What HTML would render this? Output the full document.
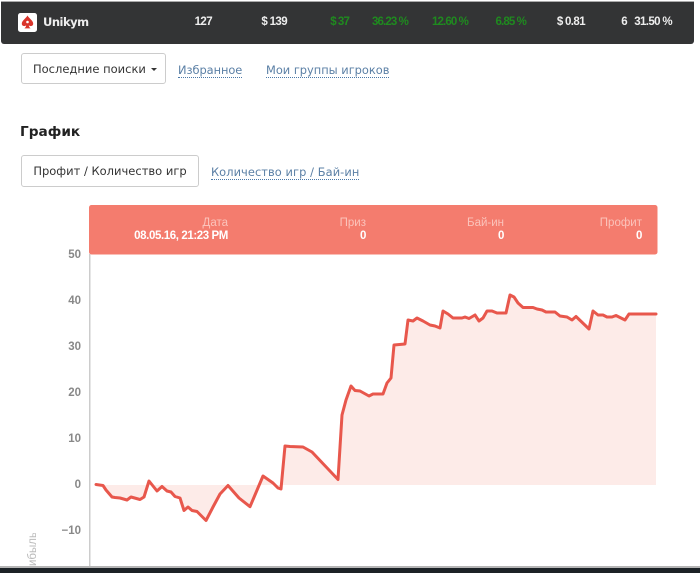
<!DOCTYPE html>
<html><head><meta charset="utf-8"><style>
html,body{margin:0;padding:0;background:#fff}
body{width:700px;height:573px;overflow:hidden;position:relative;font-family:"DejaVu Sans","Liberation Sans",sans-serif;filter:blur(.25px)}
.a{position:absolute;white-space:nowrap}
.bar{left:1px;top:1px;width:693px;height:43px;background:#333435;border-radius:0 0 3px 3px;border-top:1px solid #aaa;box-sizing:border-box}
.s{top:16px;font:bold 11.5px "Liberation Sans",sans-serif;color:#eee;transform:translateX(-100%);letter-spacing:-.6px;word-spacing:-.2px}
.g{color:#1f8a1f;letter-spacing:-.85px}
.btn{border:1px solid #ccc;border-radius:3px;box-sizing:border-box;background:#fff;color:#333;font-size:11.5px;line-height:31px;text-align:center}
.l{font-size:11.4px;color:#5a7fa5;border-bottom:1px dotted #4a78a8;line-height:14px}
.h{color:#fbc3bb;font:11.5px "Liberation Sans",sans-serif;top:217px;transform:translateX(-100%)}
.v{color:#fff;font:bold 11.5px "Liberation Sans",sans-serif;top:230px;transform:translateX(-100%);letter-spacing:-.4px}
.y{font:bold 11.5px "Liberation Sans",sans-serif;color:#888;transform:translateX(-100%)}
</style></head><body>
<div class="a bar"></div>
<svg class="a" style="left:18px;top:13px" width="20" height="19" viewBox="0 0 20 19"><rect width="19" height="19" rx="2.5" fill="#fff"/><path d="M9.5 2.5C7.5 6 3.8 7.5 3.8 10.8c0 2.2 2.6 3 4.4 1.6-.2 1.3-.8 2.2-1.8 3h6.2c-1-.8-1.6-1.7-1.8-3 1.8 1.4 4.4.6 4.4-1.6C15.2 7.5 11.5 6 9.5 2.5z" fill="#d9342b"/><circle cx="9.5" cy="9" r="1.3" fill="#fff"/></svg>
<div class="a" style="left:43px;top:15px;font:bold 11.5px 'DejaVu Sans',sans-serif;color:#eee;letter-spacing:-.5px">Unikym</div>
<div class="a s" style="left:212px">127</div>
<div class="a s" style="left:287px">$ 139</div>
<div class="a s g" style="left:349px">$ 37</div>
<div class="a s g" style="left:408px">36.23 %</div>
<div class="a s g" style="left:468px">12.60 %</div>
<div class="a s g" style="left:526px">6.85 %</div>
<div class="a s" style="left:585px">$ 0.81</div>
<div class="a s" style="left:627px">6</div>
<div class="a s" style="left:672px">31.50 %</div>

<div class="a btn" style="left:21px;top:53px;width:145px;height:31px;text-align:left;padding-left:11px">Последние поиски</div>
<div class="a" style="left:151px;top:68px;width:0;height:0;border:3px solid transparent;border-top-color:#333;border-bottom:0"></div>
<div class="a l" style="left:178px;top:63px;letter-spacing:-.05px">Избранное</div>
<div class="a l" style="left:266px;top:63px">Мои группы игроков</div>

<div class="a" style="left:20px;top:124px;font:bold 13.7px 'DejaVu Sans',sans-serif;color:#222">График</div>
<div class="a btn" style="left:21px;top:155px;width:178px;height:32px">Профит / Количество игр</div>
<div class="a l" style="left:211px;top:165px;letter-spacing:.08px">Количество игр / Бай-ин</div>

<svg class="a" style="left:0;top:0" width="700" height="573" viewBox="0 0 700 573">
<rect x="89" y="205" width="568.5" height="49.5" rx="2.5" fill="#f47c6e"/>
<rect x="89" y="254" width="1.5" height="312" fill="#ccc"/>
<path fill="#fdebe8" d="M96 485L103 485.5 106 490 112 497 115 497.5 120 498 127 500 131 497 140 499.5 144 497 149 481 157 491 162 486.5 167 491 171 492 175 496.5 180 498 184 510.5 188 507 192 510.5 197 511.5 206 520.5 213 507 220 494 228 485.5 239 498 250 506.7 263 476 273 483 278 488 281 489 285 446 290 446.5 303 447 312 452 338 479.5 342 415 346 400 351 386 355 390.5 360 391 369 396 373 394 383 394 387 383 391 378 394 345 405 344 408 320 413 321 417 318 423 321 430 325 435 326 440 328 443 311 448 314 453 318 462 318 465 317 469 318.5 475 315 479 321 483 318 487 311 492 311 497 313 506 313 510 295 514 297 518 303 523 307.5 533 307.5 537 309 542 310 546 312 555 312 560 316 567 317 572 320 576 316.5 589 329 593 311 598 315 603 315 607 317 612 317 616 315.5 625 320 629 314 656 314 656 485Z"/>
<path fill="none" stroke="#e8574c" stroke-width="3" stroke-linejoin="round" stroke-linecap="round" d="M96 484.5L103 485.5 106 490 112 497 115 497.5 120 498 127 500 131 497 140 499.5 144 497 149 481 157 491 162 486.5 167 491 171 492 175 496.5 180 498 184 510.5 188 507 192 510.5 197 511.5 206 520.5 213 507 220 494 228 485.5 239 498 250 506.7 263 476 273 483 278 488 281 489 285 446 290 446.5 303 447 312 452 338 479.5 342 415 346 400 351 386 355 390.5 360 391 369 396 373 394 383 394 387 383 391 378 394 345 405 344 408 320 413 321 417 318 423 321 430 325 435 326 440 328 443 311 448 314 453 318 462 318 465 317 469 318.5 475 315 479 321 483 318 487 311 492 311 497 313 506 313 510 295 514 297 518 303 523 307.5 533 307.5 537 309 542 310 546 312 555 312 560 316 567 317 572 320 576 316.5 589 329 593 311 598 315 603 315 607 317 612 317 616 315.5 625 320 629 314 656 314"/>
</svg>

<div class="a h" style="left:228px">Дата</div>
<div class="a v" style="left:228px">08.05.16, 21:23 PM</div>
<div class="a h" style="left:366px">Приз</div>
<div class="a v" style="left:366px">0</div>
<div class="a h" style="left:504px">Бай-ин</div>
<div class="a v" style="left:504px">0</div>
<div class="a h" style="left:642px">Профит</div>
<div class="a v" style="left:642px">0</div>

<div class="a y" style="left:81px;top:249px">50</div>
<div class="a y" style="left:81px;top:295px">40</div>
<div class="a y" style="left:81px;top:341px">30</div>
<div class="a y" style="left:81px;top:387px">20</div>
<div class="a y" style="left:81px;top:433px">10</div>
<div class="a y" style="left:81px;top:479px">0</div>
<div class="a y" style="left:81px;top:525px">−10</div>

<div class="a" style="left:27px;top:533px;height:33px;overflow:hidden;writing-mode:vertical-rl;transform:rotate(180deg);font:11.5px/13px 'Liberation Sans',sans-serif;color:#bbb">ибыль</div>

<div class="a" style="left:0;top:566px;width:700px;height:2px;background:#b5b5b5"></div>
<div class="a" style="left:0;top:568px;width:700px;height:5px;background:#1c2226"></div>
</body></html>
